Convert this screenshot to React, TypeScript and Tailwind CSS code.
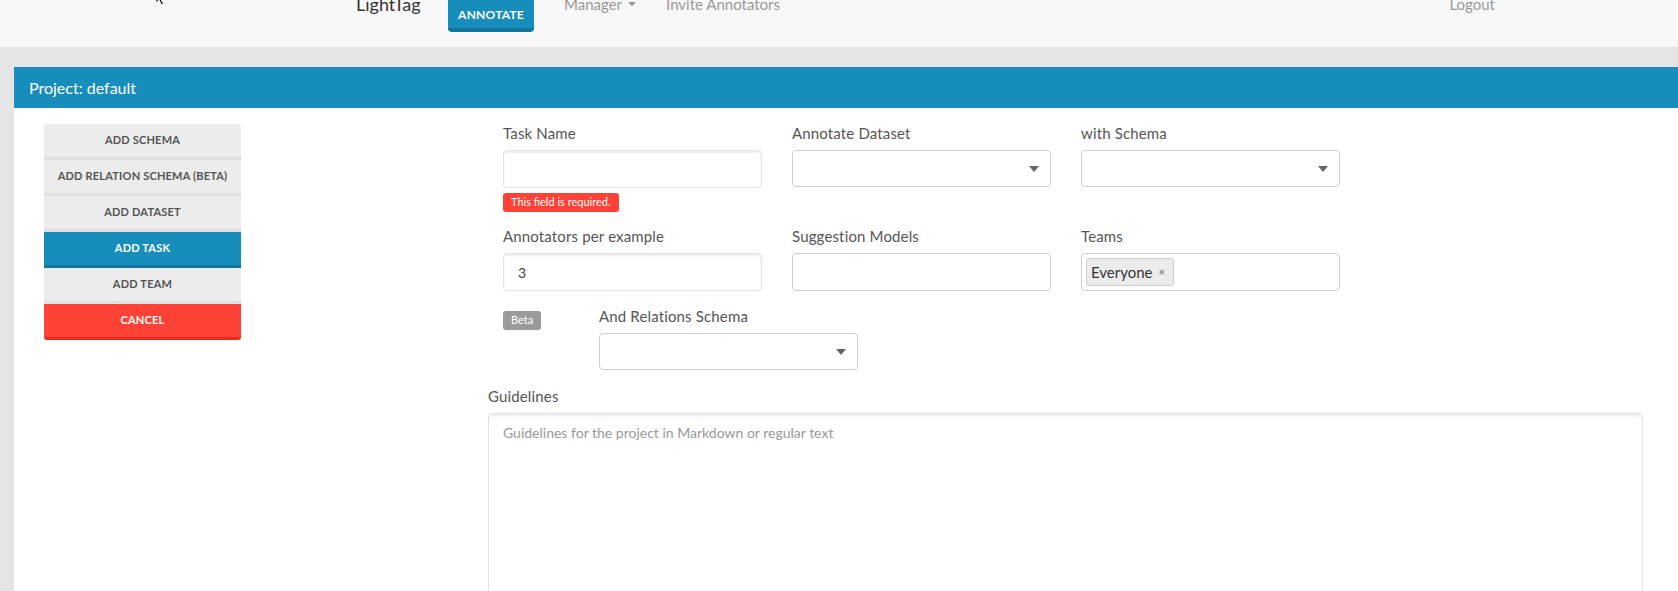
import React from "react";

const Caret = () => (
  <svg width="10" height="6" viewBox="0 0 10 6" className="block">
    <path d="M0 0 L10 0 L5 6 Z" fill="#666" />
  </svg>
);

const Label = ({ children }: { children: React.ReactNode }) => (
  <div className="h-[20px] mb-[7px] text-[15px] tracking-[0.15px] leading-[20px] text-[#555]">{children}</div>
);

const TextInput = ({ value }: { value?: string }) => (
  <div className="h-[38px] rounded-[4px] border border-[#e3e3e3] bg-white shadow-[inset_0_2px_2px_rgba(0,0,0,0.07)] flex items-center px-[14px] text-[14px] text-[#444]">
    {value}
  </div>
);

const Select = () => (
  <div className="h-[37px] rounded-[4px] border border-[#cfcfcf] bg-white flex items-center justify-end pr-[11px]">
    <Caret />
  </div>
);

const SideButton = ({
  children,
  variant = "gray",
  first,
  last,
}: {
  children: React.ReactNode;
  variant?: "gray" | "blue" | "red";
  first?: boolean;
  last?: boolean;
}) => {
  const colors =
    variant === "blue"
      ? "bg-[#178dbb] border-[#13759c] text-white"
      : variant === "red"
      ? "bg-[#ff4136] border-[#e8291e] text-white"
      : "bg-[#ececec] border-[#e0e0e0] text-[#555]";
  return (
    <div
      className={`h-[36px] border-b-[3px] flex items-center justify-center text-[11px] font-bold tracking-[0.2px] ${colors} ${
        first ? "rounded-t-[3px]" : ""
      } ${last ? "rounded-b-[3px]" : ""}`}
    >
      {children}
    </div>
  );
};

export default function App() {
  return (
    <div className="min-h-[591px] bg-[#e5e5e5] font-['Lato',_sans-serif] overflow-hidden">
      {/* Navbar */}
      <div className="relative h-[47px] bg-[#f8f8f8] flex items-start overflow-hidden">
        <svg className="absolute left-[155px] top-[-9px]" width="12" height="15" viewBox="0 0 12 15">
          <path d="M1 0 L1 12 L4 9 L6.5 14 L8.5 13 L6 8 L10 8 Z" fill="#111" stroke="#fff" strokeWidth="1" />
        </svg>
        <div className="ml-[356px] mt-[-6px] text-[18px] leading-[20px] text-[#333] w-[62px]">LightTag</div>
        <div className="ml-[30px] w-[86px] h-[32px] bg-[#178dbb] border-b-[4px] border-[#13759c] rounded-b-[4px] flex items-center justify-center pt-[2px] text-white text-[12px] font-bold tracking-[0.2px]">
          ANNOTATE
        </div>
        <div className="ml-[30px] mt-[-6px] text-[15px] leading-[20px] text-[#999] flex items-center gap-[6px]">
          Manager
          <svg width="8" height="5" viewBox="0 0 8 5" className="mt-[1px]">
            <path d="M0 0 L8 0 L4 4.5 Z" fill="#999" />
          </svg>
        </div>
        <div className="ml-[30px] mt-[-6px] text-[15px] leading-[20px] text-[#999]">Invite Annotators</div>
        <div className="ml-auto mr-[183px] mt-[-6px] text-[15px] leading-[20px] text-[#999]">Logout</div>
      </div>

      {/* Main */}
      <div className="pl-[14px] pt-[20px]">
        <div className="bg-white min-h-[524px]">
          <div className="h-[41px] bg-[#178dbb] flex items-center pl-[15px] text-white text-[16px]">
            Project: default
          </div>
          <div className="flex">
            {/* Sidebar */}
            <div className="w-[474px] shrink-0 pl-[30px] pt-[16px]">
              <div className="w-[197px] flex flex-col">
                <SideButton first>ADD SCHEMA</SideButton>
                <SideButton>ADD RELATION SCHEMA (BETA)</SideButton>
                <SideButton>ADD DATASET</SideButton>
                <SideButton variant="blue">ADD TASK</SideButton>
                <SideButton>ADD TEAM</SideButton>
                <SideButton variant="red" last>
                  CANCEL
                </SideButton>
              </div>
            </div>

            {/* Form */}
            <div className="w-[1155px] shrink-0 pt-[15px]">
              {/* Row 1 */}
              <div className="flex">
                <div className="w-[289px] px-[15px]">
                  <Label>Task Name</Label>
                  <TextInput />
                  <div className="mt-[3px] inline-flex h-[19px] items-center rounded-[3px] bg-[#ff4136] px-[8px] text-[11px] text-white">
                    This field is required.
                  </div>
                </div>
                <div className="w-[289px] px-[15px]">
                  <Label>Annotate Dataset</Label>
                  <Select />
                </div>
                <div className="w-[289px] px-[15px]">
                  <Label>with Schema</Label>
                  <Select />
                </div>
              </div>

              {/* Row 2 */}
              <div className="flex mt-[14px]">
                <div className="w-[289px] px-[15px]">
                  <Label>Annotators per example</Label>
                  <TextInput value="3" />
                </div>
                <div className="w-[289px] px-[15px]">
                  <Label>Suggestion Models</Label>
                  <div className="h-[38px] rounded-[4px] border border-[#cfcfcf] bg-white" />
                </div>
                <div className="w-[289px] px-[15px]">
                  <Label>Teams</Label>
                  <div className="h-[38px] rounded-[4px] border border-[#cfcfcf] bg-white flex items-center pl-[4px]">
                    <div className="h-[28px] rounded-[3px] border border-[#cfcfcf] bg-[#ececec] flex items-center pl-[4px] pr-[8px] gap-[6px]">
                      <span className="text-[15px] text-[#333]">Everyone</span>
                      <span className="text-[11px] text-[#666]">×</span>
                    </div>
                  </div>
                </div>
              </div>

              {/* Row 3 */}
              <div className="flex mt-[15px]">
                <div className="w-[96px] px-[15px]">
                  <div className="mt-[3px] inline-flex h-[19px] items-center rounded-[3px] bg-[#9a9a9a] px-[8px] text-[11px] text-white">
                    Beta
                  </div>
                </div>
                <div className="w-[289px] px-[15px]">
                  <Label>And Relations Schema</Label>
                  <Select />
                </div>
              </div>

              {/* Guidelines */}
              <div className="mt-[16px]">
                <Label>Guidelines</Label>
                <div className="h-[220px] rounded-[4px] border border-[#e3e3e3] shadow-[inset_0_3px_2px_rgba(0,0,0,0.05)] px-[14px] pt-[8px] text-[14px] text-[#999]">
                  Guidelines for the project in Markdown or regular text
                </div>
              </div>
            </div>
          </div>
        </div>
      </div>
    </div>
  );
}
